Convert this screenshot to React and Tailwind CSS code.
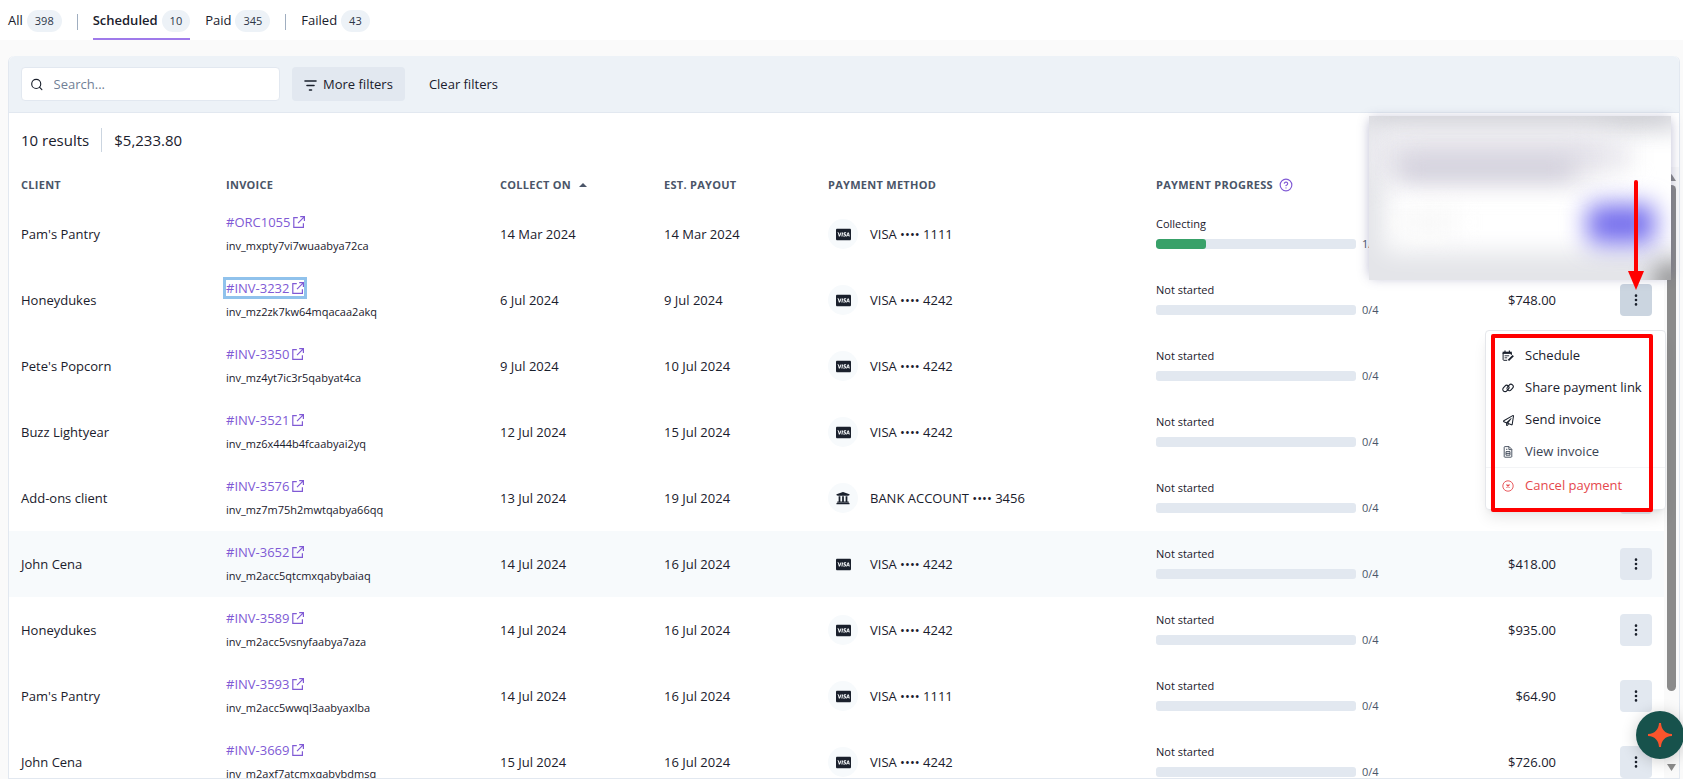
import { FiSearch, FiHelpCircle } from "react-icons/fi";
import { FaCcVisa, FaRegPaperPlane, FaUniversity } from "react-icons/fa";
import { BsThreeDotsVertical } from "react-icons/bs";

const tabs = [
  { label: "All", count: 398, divider: true },
  { label: "Scheduled", count: 10, active: true },
  { label: "Paid", count: 345, divider: true },
  { label: "Failed", count: 43 },
];

const payments = [
  { client: "Pam's Pantry", invoice: "#ORC1055", id: "inv_mxpty7vi7wuaabya72ca", collectOn: "14 Mar 2024", payout: "14 Mar 2024", method: "VISA •••• 1111", paid: 1 },
  { client: "Honeydukes", invoice: "#INV-3232", id: "inv_mz2zk7kw64mqacaa2akq", collectOn: "6 Jul 2024", payout: "9 Jul 2024", method: "VISA •••• 4242", paid: 0, amount: "$748.00", menuOpen: true },
  { client: "Pete's Popcorn", invoice: "#INV-3350", id: "inv_mz4yt7ic3r5qabyat4ca", collectOn: "9 Jul 2024", payout: "10 Jul 2024", method: "VISA •••• 4242", paid: 0 },
  { client: "Buzz Lightyear", invoice: "#INV-3521", id: "inv_mz6x444b4fcaabyai2yq", collectOn: "12 Jul 2024", payout: "15 Jul 2024", method: "VISA •••• 4242", paid: 0 },
  { client: "Add-ons client", invoice: "#INV-3576", id: "inv_mz7m75h2mwtqabya66qq", collectOn: "13 Jul 2024", payout: "19 Jul 2024", method: "BANK ACCOUNT •••• 3456", bank: true, paid: 0 },
  { client: "John Cena", invoice: "#INV-3652", id: "inv_m2acc5qtcmxqabybaiaq", collectOn: "14 Jul 2024", payout: "16 Jul 2024", method: "VISA •••• 4242", paid: 0, amount: "$418.00", highlighted: true },
  { client: "Honeydukes", invoice: "#INV-3589", id: "inv_m2acc5vsnyfaabya7aza", collectOn: "14 Jul 2024", payout: "16 Jul 2024", method: "VISA •••• 4242", paid: 0, amount: "$935.00" },
  { client: "Pam's Pantry", invoice: "#INV-3593", id: "inv_m2acc5wwql3aabyaxlba", collectOn: "14 Jul 2024", payout: "16 Jul 2024", method: "VISA •••• 1111", paid: 0, amount: "$64.90" },
  { client: "John Cena", invoice: "#INV-3669", id: "inv_m2axf7atcmxqabybdmsq", collectOn: "15 Jul 2024", payout: "16 Jul 2024", method: "VISA •••• 4242", paid: 0, amount: "$726.00" },
];

const INSTALMENTS = 4;

const ExternalIcon = () => (
  <svg width="12" height="12" viewBox="0 0 12 12" fill="none" stroke="currentColor" strokeWidth="1.2" aria-hidden="true">
    <path d="M4.8 1.6H.8v9.8h9.6V7.2" />
    <path d="M7.2.7h4.2v4.2M11.2.9 5 7.1" />
  </svg>
);

const FilterIcon = () => (
  <svg width="13" height="13" viewBox="0 0 13 13" fill="none" stroke="currentColor" strokeWidth="1.6" strokeLinecap="round" aria-hidden="true">
    <path d="M1 2h11M3 6.5h7M5.5 11h2" />
  </svg>
);

const ScheduleIcon = () => (
  <svg width="12" height="12" viewBox="0 0 12 12" fill="none" stroke="currentColor" aria-hidden="true">
    <path d="M3 .4v2M7.4 .4v2" strokeWidth="1.2" />
    <path d="M.6 1.7h9.2v2.2H.6z" fill="currentColor" stroke="none" />
    <path d="M1.1 3v6.6c0 .4.3.7.7.7h3.4M9.3 3v2" />
    <path d="M2.6 5.8h4.6M2.6 7.8h2.6" strokeWidth="0.9" />
    <path d="M6.4 10.4 11.2 5.6" strokeWidth="1.9" />
  </svg>
);

const LinkIcon = () => (
  <svg width="13" height="12" viewBox="0 0 13 12" fill="none" stroke="currentColor" strokeWidth="1.2" aria-hidden="true">
    <rect x="0.4" y="4" width="7.6" height="5" rx="2.5" transform="rotate(-48 4.2 6.5)" />
    <rect x="5" y="3" width="7.6" height="5" rx="2.5" transform="rotate(-48 8.8 5.5)" />
  </svg>
);

const DocumentIcon = () => (
  <svg width="12" height="12" viewBox="0 0 12 12" fill="none" stroke="currentColor" strokeWidth="0.9" aria-hidden="true">
    <path d="M2.2 1.3c0-.4.3-.7.7-.7h4.2l2.7 2.7v7.2c0 .4-.3.7-.7.7H2.9a.7.7 0 0 1-.7-.7z" />
    <path d="M6.9.8v2.8h2.8M4 5.6h4v3.6H4zM4 7.4h4M4 3.3h1.4" />
  </svg>
);

const CancelIcon = () => (
  <svg width="12" height="12" viewBox="0 0 12 12" fill="none" stroke="currentColor" strokeWidth="0.9" aria-hidden="true">
    <circle cx="6" cy="6" r="5.2" />
    <path d="m4.5 4.5 3 3m0-3-3 3" strokeWidth="1.1" />
  </svg>
);

const menuItems = [
  { label: "Schedule", icon: <ScheduleIcon /> },
  { label: "Share payment link", icon: <LinkIcon /> },
  { label: "Send invoice", icon: <FaRegPaperPlane size={11} /> },
  { label: "View invoice", icon: <DocumentIcon />, muted: true },
];

const ActionsMenu = () => (
  <>
    <div className="absolute top-[46px] -right-3.5 z-20 w-[181px] rounded border border-gray-200 bg-white py-2 text-left shadow-lg">
      {menuItems.map((item) => (
        <button
          key={item.label}
          type="button"
          className={`flex h-8 w-full items-center gap-[11px] pt-0.5 pl-4 ${item.muted ? "text-[#3a4454]" : "text-[#1a202c]"}`}
        >
          <span className="flex w-3 justify-center">{item.icon}</span>
          {item.label}
        </button>
      ))}
      <button type="button" className="flex h-[34px] w-full items-center gap-[11px] border-t border-gray-100 pt-0.5 pl-4 text-[#e5484d]">
        <span className="flex w-3 justify-center">
          <CancelIcon />
        </span>
        Cancel payment
      </button>
    </div>

    {/* Callout frame and arrow */}
    <div className="pointer-events-none absolute top-[50px] -right-px z-30 h-[178px] w-[162px] rounded-xs border-4 border-[#ff0000]"></div>
    <svg className="pointer-events-none absolute bottom-[26px] left-2 z-30" width="16" height="110" viewBox="0 0 16 110" aria-hidden="true">
      <path d="M8 2v92" stroke="#ff0000" strokeWidth="4" strokeLinecap="round" />
      <path d="M0 91h16l-8 19z" fill="#ff0000" />
    </svg>
  </>
);

const PaymentRow = ({ p }) => (
  <tr className={`h-[66px] ${p.highlighted ? "bg-[#f7fafc]" : ""}`}>
    <td className="px-3 pt-0.5">{p.client}</td>
    <td className="px-3">
      <div className="flex flex-col items-start gap-2 leading-4">
        <a
          href="#"
          className={`flex items-center gap-[3px] text-[#805ad5] ${p.menuOpen ? "outline-3 outline-[#90c2ec]" : ""}`}
        >
          {p.invoice}
          <ExternalIcon />
        </a>
        <span className="text-[11px]">{p.id}</span>
      </div>
    </td>
    <td className="px-3 pt-0.5">{p.collectOn}</td>
    <td className="px-3 pt-0.5">{p.payout}</td>
    <td className="px-3">
      <div className="flex items-center gap-3">
        <span className="flex size-[30px] items-center justify-center rounded-full bg-[#f7fafc]">
          {p.bank ? <FaUniversity size={14} /> : <FaCcVisa size={15} />}
        </span>
        <span className="pt-0.5">{p.method}</span>
      </div>
    </td>
    <td className="px-3 text-[11px] leading-4">
      <div className="mb-1">{p.paid > 0 ? "Collecting" : "Not started"}</div>
      <div className="flex items-center gap-1.5 text-[#4a5568]">
        <div className="h-2.5 w-[200px] overflow-hidden rounded-[3px] bg-[#e2e8f0]">
          <div className="h-full rounded-[3px] bg-[#38a169]" style={{ width: `${(p.paid / INSTALMENTS) * 100}%` }}></div>
        </div>
        {p.paid}/{INSTALMENTS}
      </div>
    </td>
    <td className="px-3 pt-0.5 text-right">{p.amount}</td>
    <td className="px-3">
      <div className="relative ml-auto size-8">
        <button
          type="button"
          aria-label={`Actions for ${p.invoice}`}
          className={`flex size-8 items-center justify-center rounded ${p.menuOpen ? "bg-[#cbd5e0]" : "bg-[#e2e8f0]"}`}
        >
          <BsThreeDotsVertical size={14} />
        </button>
        {p.menuOpen && <ActionsMenu />}
      </div>
    </td>
  </tr>
);

const App = () => {
  return (
    <div className="flex h-screen flex-col overflow-hidden bg-[#fafafa] font-['Open_Sans','Noto_Sans',sans-serif] text-[13px] text-[#1a202c]">
      {/* Tabs */}
      <nav className="flex h-10 shrink-0 items-center gap-[15px] bg-white pl-2">
        {tabs.map((tab) => (
          <div key={tab.label} className="flex items-center gap-[15px]">
            <a
              href="#"
              className={`flex h-10 items-center gap-1 border-b-2 pt-1 ${tab.active ? "border-[#9f7aea] font-semibold" : "border-transparent"}`}
            >
              {tab.label}
              <span className="flex h-[22px] items-center rounded-full bg-[#edf2f7] px-2 text-[11px] font-medium text-[#2d3748]">
                {tab.count}
              </span>
            </a>
            {tab.divider && <span className="mt-1 h-4 w-px bg-[#a0aec0]"></span>}
          </div>
        ))}
      </nav>

      <main className="flex min-h-0 flex-1 flex-col pt-4 pr-[3px] pl-2">
        <section className="relative flex min-h-0 flex-1 flex-col rounded-t-md border border-t-0 border-[#e2e8f0] bg-white">
          {/* Filters */}
          <div className="flex h-[57px] shrink-0 items-center gap-3 rounded-t-md border-b border-[#e2e8f0] bg-[#edf2f7] px-3">
            <label className="flex h-[34px] w-[259px] items-center gap-2.5 rounded border border-[#e2e8f0] bg-white pl-2">
              <FiSearch size={15} />
              <input
                type="text"
                aria-label="Search"
                placeholder="Search..."
                className="w-full bg-transparent pt-0.5 outline-none placeholder:text-[#718096]"
              />
            </label>
            <button type="button" className="flex h-[34px] items-center gap-1.5 rounded bg-[#e2e8f0] px-3 pt-0.5 font-medium">
              <FilterIcon />
              More filters
            </button>
            <button type="button" className="h-[34px] px-3 pt-0.5 font-medium">
              Clear filters
            </button>
          </div>

          <div className="flex h-[54px] shrink-0 items-center gap-3 px-3 text-[15px]">
            <span>10 results</span>
            <span className="h-6 w-px bg-[#cbd5e0]"></span>
            <span>$5,233.80</span>
          </div>

          {/* Payments table */}
          <div className="flex min-h-0 flex-1 overflow-hidden">
            <div className="min-w-0 flex-1">
              <table className="w-full table-fixed text-left">
                <thead>
                  <tr className="h-[34px] text-[11px] tracking-wide text-[#4a5568] uppercase">
                    <th className="w-[205px] px-3 pt-0.5 font-bold">Client</th>
                    <th className="w-[274px] px-3 pt-0.5 font-bold">Invoice</th>
                    <th className="w-[164px] px-3 pt-0.5 font-bold">
                      <span className="flex items-center gap-2">
                        Collect on
                        <svg width="8" height="4" viewBox="0 0 8 4" fill="currentColor" aria-hidden="true">
                          <path d="M0 4 4 0l4 4z" />
                        </svg>
                      </span>
                    </th>
                    <th className="w-[164px] px-3 pt-0.5 font-bold">Est. payout</th>
                    <th className="w-[328px] px-3 pt-0.5 font-bold">Payment method</th>
                    <th className="px-3 pt-0.5 font-bold">
                      <span className="flex items-center gap-1.5">
                        Payment progress
                        <FiHelpCircle size={14} className="text-[#805ad5]" />
                      </span>
                    </th>
                    <th className="w-[164px] px-3"></th>
                    <th className="w-24 px-3"></th>
                  </tr>
                </thead>
                <tbody>
                  {payments.map((p) => (
                    <PaymentRow key={p.id} p={p} />
                  ))}
                </tbody>
              </table>
            </div>

            {/* Scrollbar */}
            <div className="flex w-[15px] shrink-0 flex-col items-center gap-1 bg-[#fafafa] py-1.5">
              <svg width="9" height="8" viewBox="0 0 9 8" fill="#8b8b8b" aria-hidden="true">
                <path d="M4.5 1 9 8H0z" />
              </svg>
              <div className="w-[9px] flex-1">
                <div className="h-[88%] rounded-full bg-[#8b8b8b]"></div>
              </div>
              <svg width="9" height="8" viewBox="0 0 9 8" fill="#8b8b8b" aria-hidden="true">
                <path d="M0 0h9L4.5 7z" />
              </svg>
            </div>
          </div>

          {/* Obscured notification */}
          <div className="absolute top-16 right-2 z-10 h-40 w-[302px] rounded-md shadow-[0_-2px_12px_rgba(70,70,130,0.35)]">
            <div className="relative -mt-1 h-[164px] overflow-hidden bg-[#e4e5e9]">
              <div className="absolute top-4 -right-8 bottom-7 left-4 bg-white blur-md"></div>
              <div className="absolute -top-2 right-0 left-0 h-3 bg-[#b8b8c0] blur-md"></div>
              <div className="absolute top-3 right-16 -left-2 h-12 bg-[#ebeaef] blur-lg"></div>
              <div className="absolute top-8 right-10 left-8 h-4 bg-[#dfdde6] blur-md"></div>
              <div className="absolute top-11 right-24 left-7 h-5 bg-[#cbc8d6] blur-md"></div>
              <div className="absolute top-24 left-8 h-5 w-14 bg-[#f6f6f6] blur-md"></div>
              <div className="absolute right-4 bottom-9 h-10 w-[68px] rounded-lg bg-[#766fed] blur-md"></div>
              <div className="absolute -right-4 -bottom-4 size-8 rounded-full bg-[#7b7b7b] blur-md"></div>
            </div>
          </div>
        </section>
      </main>

      {/* Assistant launcher */}
      <button
        type="button"
        aria-label="Open assistant"
        className="fixed right-0 bottom-5 z-40 flex size-12 translate-x-px items-center justify-center rounded-full bg-[#17524c] shadow-[0_2px_16px_rgba(0,0,0,0.2)]"
      >
        <svg width="24" height="24" viewBox="0 0 24 24" fill="#fa542c" aria-hidden="true">
          <path d="M11 0h2c.4 6 3.5 10.5 11 11v2c-7.5.5-10.6 5-11 11h-2c-.4-6-3.5-10.5-11-11v-2c7.5-.5 10.6-5 11-11z" />
        </svg>
      </button>
    </div>
  );
};

export default App;
